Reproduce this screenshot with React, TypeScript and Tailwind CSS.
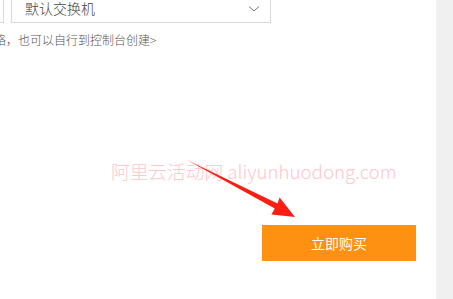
export default function App() {
  const font = { fontFamily: '"Microsoft YaHei", "Noto Sans CJK SC", "Liberation Sans", sans-serif' };
  return (
    <div className="relative h-[299px] w-[453px] overflow-hidden bg-white" style={font}>
      <div className="flex h-full">
        <div className="relative w-[436px]">
          {/* select row */}
          <div className="-mt-[14px] flex h-[37px] items-stretch">
            <div className="w-[4px] border border-l-0 border-[#d9d9d9]" />
            <div className="ml-[7px] flex w-[260px] items-center justify-between border border-[#d9d9d9] pl-[13px] pr-[10px]">
              <span className="pt-[8px] text-[14px] font-light text-[#444]">默认交换机</span>
              <svg className="mt-[8px]" width="12" height="8" viewBox="0 0 12 8" fill="none">
                <path d="M1 1.5 L6 6 L11 1.5" stroke="#777" strokeWidth="1" />
              </svg>
            </div>
          </div>
          <div className="-ml-[6px] mt-[9px] text-[12px] font-light leading-[16px] text-[#555]">
            络，也可以自行到控制台创建&gt;
          </div>

          {/* watermark */}
          <div className="absolute left-[111px] top-[159px] whitespace-nowrap text-[18.7px] font-light leading-[24px] text-[#fcc8ce]">
            阿里云活动网 aliyunhuodong.com
          </div>

          {/* arrow */}
          <svg className="absolute left-0 top-0" width="436" height="299" viewBox="0 0 436 299">
            <polygon
              points="187,160 277.5,203.5 279.6,197.5 295,217 271.4,214.5 274.8,208.5"
              fill="#fe1d13"
            />
          </svg>

          <div className="absolute left-[262px] top-[225px] flex h-[36px] w-[154px] items-center justify-center bg-[#fe9012] text-[14px] text-white">
            立即购买
          </div>
        </div>
        <div className="flex-1 bg-[#f0f0f0]" />
      </div>
    </div>
  );
}
